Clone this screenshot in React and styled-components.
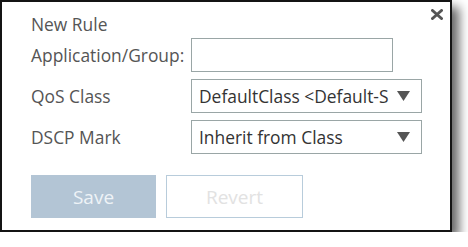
import React from "react"
import styled, { createGlobalStyle } from "styled-components"

const GlobalStyle = createGlobalStyle`
    html, body {
        margin: 0;
        padding: 0;
        background: #ffffff;
    }
    body {
        font-family: "Open Sans", "Liberation Sans", sans-serif;
    }
`

const Dialog = styled.div`
    position: relative;
    box-sizing: border-box;
    width: 452px;
    height: 232px;
    border: 2px solid #141414;
    background: #ffffff;
    box-shadow: 7px 7px 10px rgba(0, 0, 0, 0.6);
    padding: 10px 0 0 29px;
`

const CloseBtn = styled.button`
    position: absolute;
    top: 7px;
    right: 7px;
    width: 12px;
    height: 11px;
    padding: 0;
    border: none;
    background: none;
    cursor: pointer;
    svg { display: block; }
`

const Title = styled.div`
    font-size: 17.4px;
    color: #555;
    line-height: 24px;
    height: 26px;
`

const Form = styled.div`
    display: grid;
    grid-template-columns: 160px auto;
    row-gap: 7px;
    align-items: center;
`

const Label = styled.div`
    font-size: 17.4px;
    color: #555;
    white-space: nowrap;
`

const TextInput = styled.input`
    box-sizing: border-box;
    width: 202px;
    height: 34px;
    border: 1px solid #9aa6a6;
    font-family: inherit;
    font-size: 17px;
    outline: none;
`

const SelectBox = styled.div`
    box-sizing: border-box;
    width: 231px;
    height: 34px;
    border: 1px solid #9aa6a6;
    display: flex;
    align-items: center;
    padding: 0 11px 0 7px;
    font-size: 17.4px;
    color: #333;
    span {
        flex: 1;
        overflow: hidden;
        white-space: nowrap;
    }
    svg { flex: none; margin-left: 8px; }
`

const Actions = styled.div`
    display: flex;
    gap: 10px;
    margin-top: 21px;
`

const Button = styled.button`
    box-sizing: border-box;
    height: 43px;
    width: ${p => p.width}px;
    font-family: inherit;
    font-size: 19px;
    border: 1px solid ${p => p.primary ? "#b3c5d5" : "#b8ccdb"};
    background: ${p => p.primary ? "#b3c5d5" : "#ffffff"};
    color: ${p => p.primary ? "#eef3f7" : "#e2e2e2"};
`

const Caret = () => (
    <svg width="13" height="10" viewBox="0 0 13 10">
        <path d="M0 0 H13 L6.5 10 Z" fill="#555" />
    </svg>
)

const Select = ({ value }) => (
    <SelectBox>
        <span>{value}</span>
        <Caret />
    </SelectBox>
)

const App = () => {
    return (
        <>
            <GlobalStyle />
            <Dialog>
                <CloseBtn>
                    <svg width="12" height="11" viewBox="0 0 12 11">
                        <path d="M1.5 1.5 L10.5 9.5 M10.5 1.5 L1.5 9.5" stroke="#555" strokeWidth="3" strokeLinecap="round" />
                    </svg>
                </CloseBtn>
                <Title>New Rule</Title>
                <Form>
                    <Label>Application/Group:</Label>
                    <TextInput />
                    <Label>QoS Class</Label>
                    <Select value="DefaultClass <Default-Site>" />
                    <Label>DSCP Mark</Label>
                    <Select value="Inherit from Class" />
                </Form>
                <Actions>
                    <Button primary width={125}>Save</Button>
                    <Button width={137}>Revert</Button>
                </Actions>
            </Dialog>
        </>
    )
}

export default App
